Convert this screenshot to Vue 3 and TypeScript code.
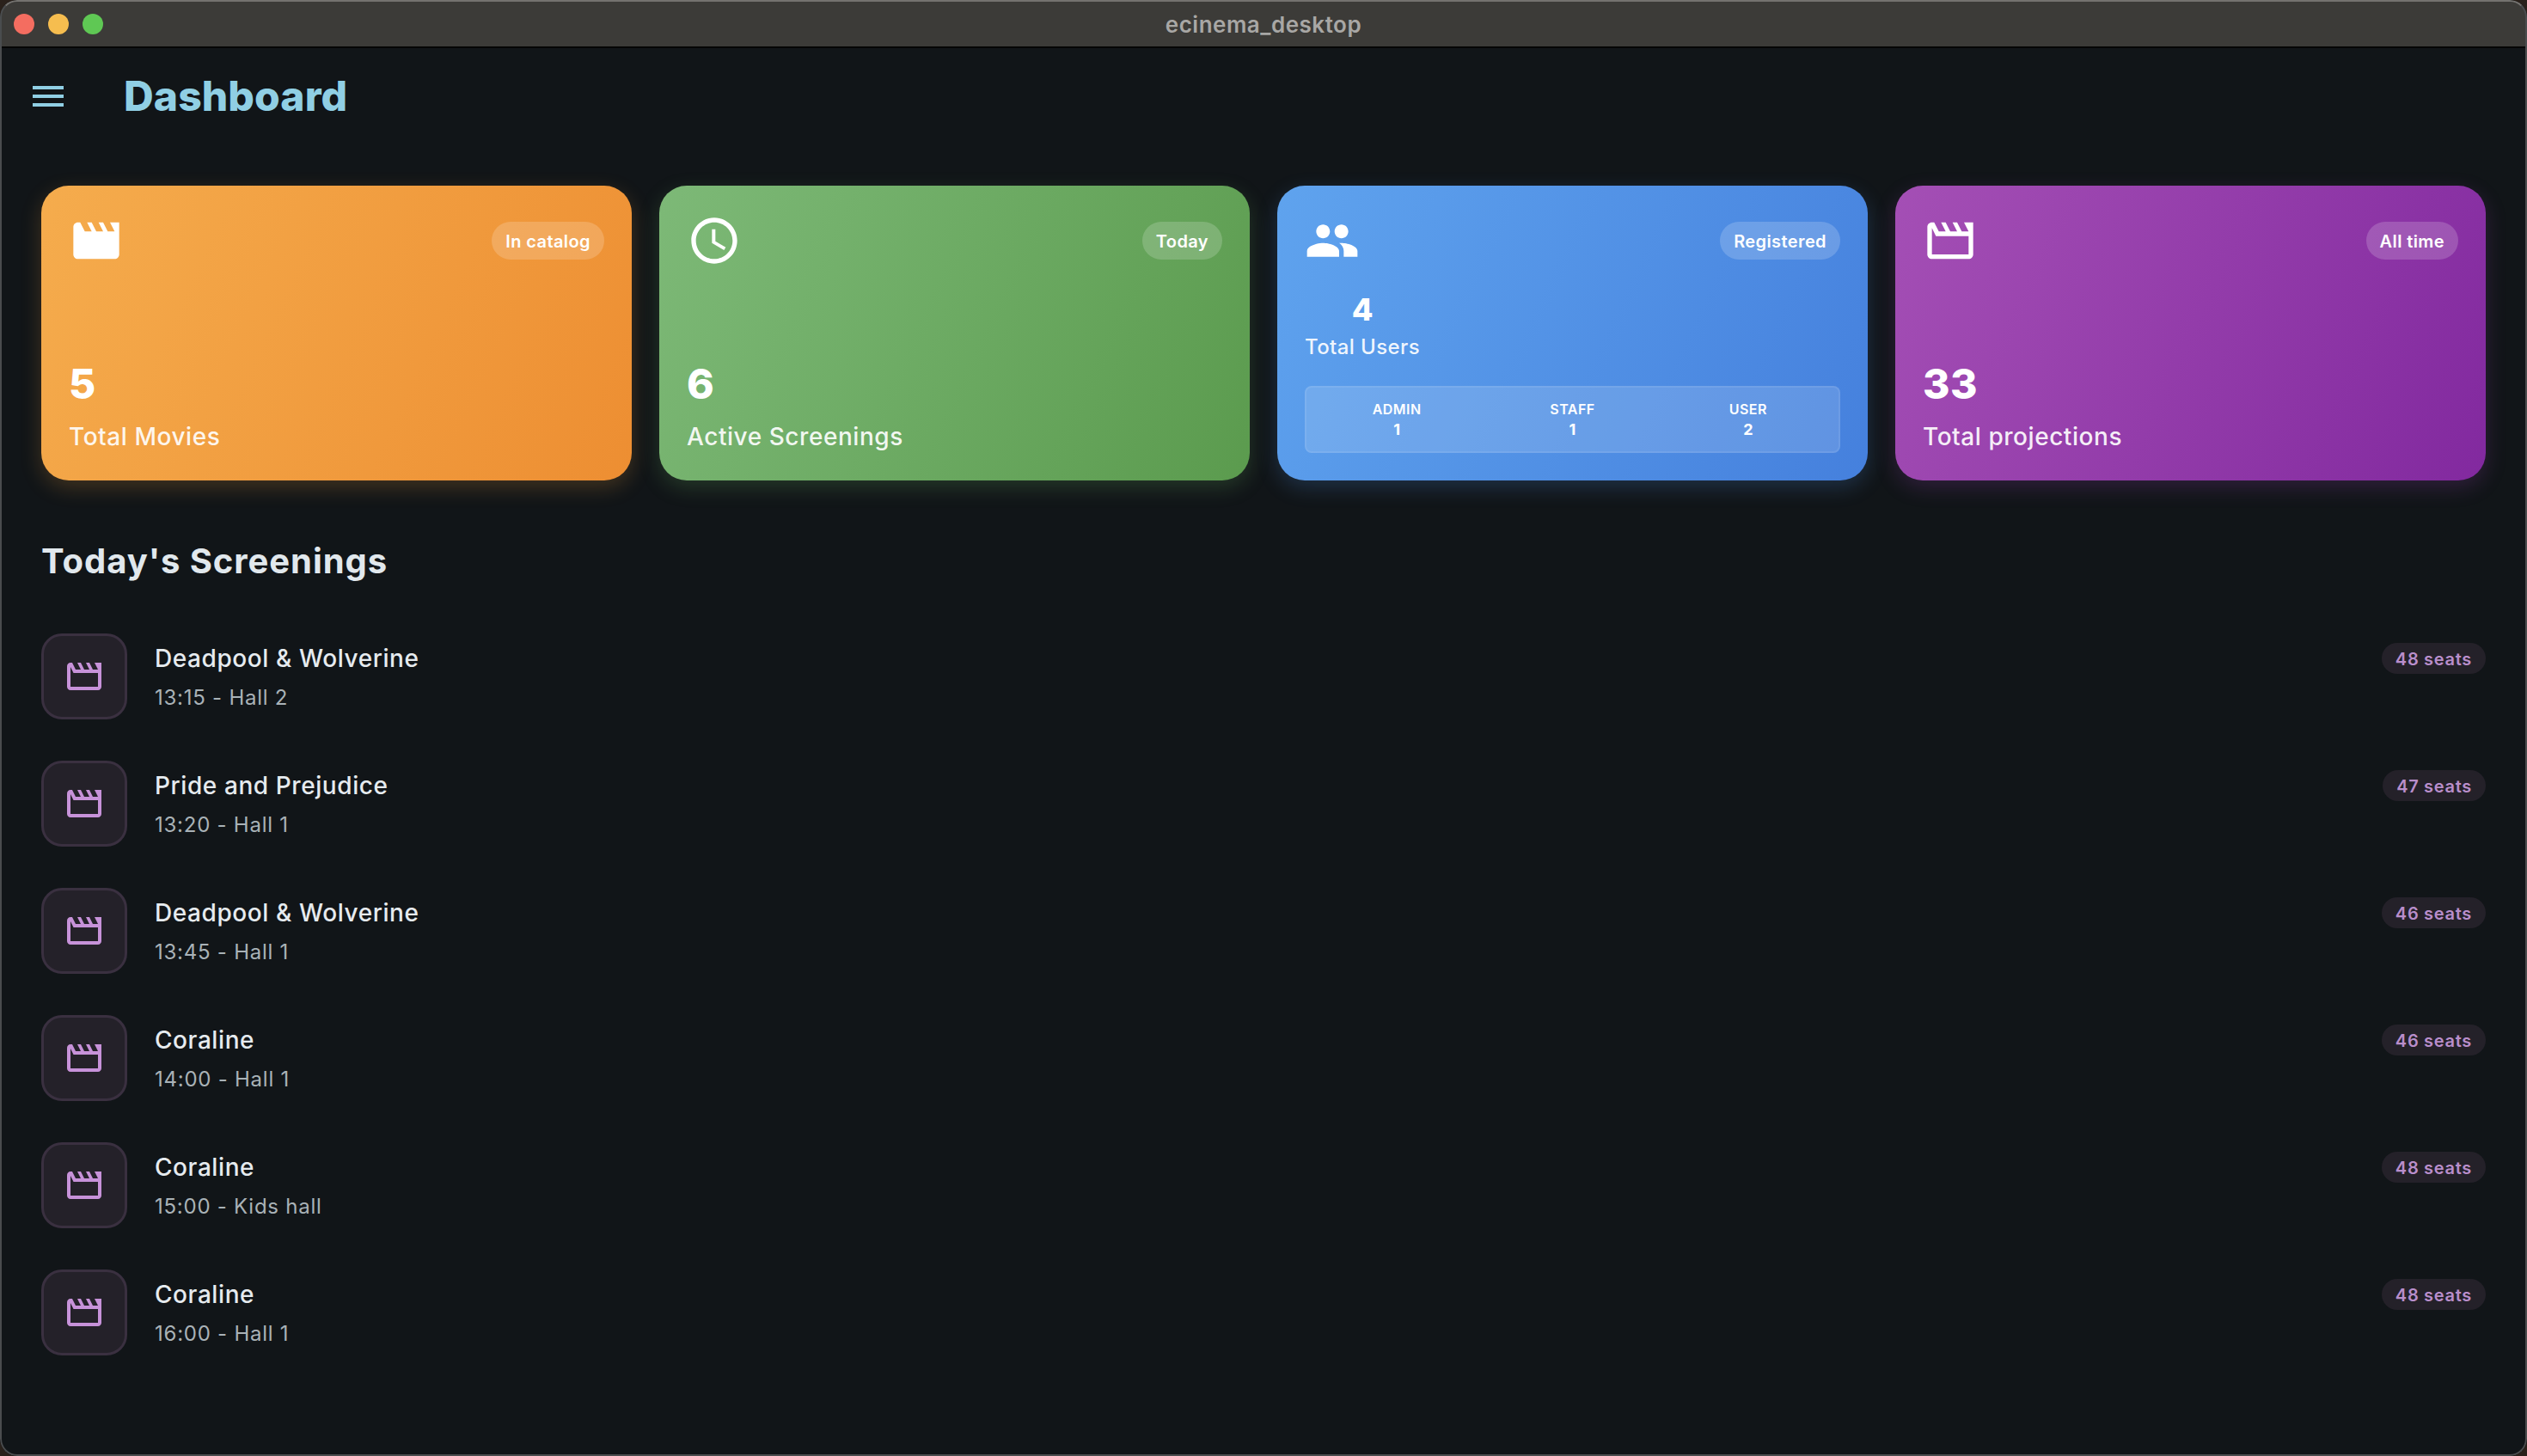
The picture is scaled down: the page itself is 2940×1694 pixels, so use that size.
<script setup lang="ts">
interface StatCard {
  tone: string;
  icon: string;
  badge: string;
  value: string;
  label: string;
}

const icons = {
  movie:
    "M18 4l2 4h-3l-2-4h-2l2 4h-3l-2-4H8l2 4H7L5 4H4c-1.1 0-1.99.9-1.99 2L2 18c0 1.1.9 2 2 2h16c1.1 0 2-.9 2-2V4h-4z",
  movieOutlined:
    "M4 6.47L5.76 10H20v8H4V6.47M22 4h-4l2 4h-3l-2-4h-2l2 4h-3l-2-4H8l2 4H7L5 4H4c-1.1 0-1.99.9-1.99 2L2 18c0 1.1.9 2 2 2h16c1.1 0 2-.9 2-2V4z",
  schedule:
    "M11.99 2C6.47 2 2 6.48 2 12s4.47 10 9.99 10C17.52 22 22 17.52 22 12S17.52 2 11.99 2zM12 20c-4.42 0-8-3.58-8-8s3.58-8 8-8 8 3.58 8 8-3.58 8-8 8zm.5-13H11v6l5.25 3.15.75-1.23-4.5-2.67z",
  people:
    "M16 11c1.66 0 2.99-1.34 2.99-3S17.66 5 16 5c-1.66 0-3 1.34-3 3s1.34 3 3 3zm-8 0c1.66 0 2.99-1.34 2.99-3S9.66 5 8 5C6.34 5 5 6.34 5 8s1.34 3 3 3zm0 2c-2.33 0-7 1.17-7 3.5V19h14v-2.5c0-2.33-4.67-3.5-7-3.5zm8 0c-.29 0-.62.02-.97.05 1.16.84 1.97 1.97 1.97 3.45V19h6v-2.5c0-2.33-4.67-3.5-7-3.5z",
  menu: "M3 18h18v-2H3v2zm0-5h18v-2H3v2zm0-7v2h18V6H3z",
};

const cards: StatCard[] = [
  { tone: "orange", icon: icons.movie, badge: "In catalog", value: "5", label: "Total Movies" },
  { tone: "green", icon: icons.schedule, badge: "Today", value: "6", label: "Active Screenings" },
  { tone: "blue", icon: icons.people, badge: "Registered", value: "4", label: "Total Users" },
  { tone: "purple", icon: icons.movieOutlined, badge: "All time", value: "33", label: "Total projections" },
];

const roles = [
  { name: "ADMIN", count: 1 },
  { name: "STAFF", count: 1 },
  { name: "USER", count: 2 },
];

const screenings = [
  { title: "Deadpool & Wolverine", when: "13:15 - Hall 2", seats: 48 },
  { title: "Pride and Prejudice", when: "13:20 - Hall 1", seats: 47 },
  { title: "Deadpool & Wolverine", when: "13:45 - Hall 1", seats: 46 },
  { title: "Coraline", when: "14:00 - Hall 1", seats: 46 },
  { title: "Coraline", when: "15:00 - Kids hall", seats: 48 },
  { title: "Coraline", when: "16:00 - Hall 1", seats: 48 },
];
</script>

<template>
  <div class="window">
    <header class="titlebar">
      <div class="lights">
        <span class="light red"></span>
        <span class="light yellow"></span>
        <span class="light green"></span>
      </div>
      <span class="window-title">ecinema_desktop</span>
    </header>

    <div class="appbar">
      <svg class="menu" viewBox="0 0 24 24"><path :d="icons.menu" /></svg>
      <h1>Dashboard</h1>
    </div>

    <main class="content">
      <section class="cards">
        <article v-for="card in cards" :key="card.label" class="card" :class="card.tone">
          <div class="card-top">
            <svg class="card-icon" viewBox="0 0 24 24"><path :d="card.icon" /></svg>
            <span class="badge">{{ card.badge }}</span>
          </div>
          <template v-if="card.tone === 'blue'">
            <div class="users-stat">
              <div class="users-value">{{ card.value }}</div>
              <div class="users-label">{{ card.label }}</div>
            </div>
            <div class="roles">
              <div v-for="role in roles" :key="role.name" class="role">
                <span class="role-name">{{ role.name }}</span>
                <span class="role-count">{{ role.count }}</span>
              </div>
            </div>
          </template>
          <div v-else class="stat">
            <div class="value">{{ card.value }}</div>
            <div class="label">{{ card.label }}</div>
          </div>
        </article>
      </section>

      <h2>Today's Screenings</h2>

      <ul class="screenings">
        <li v-for="(item, i) in screenings" :key="i" class="screening">
          <div class="thumb">
            <svg viewBox="0 0 24 24"><path :d="icons.movieOutlined" /></svg>
          </div>
          <div class="info">
            <div class="name">{{ item.title }}</div>
            <div class="when">{{ item.when }}</div>
          </div>
          <span class="seats">{{ item.seats }} seats</span>
        </li>
      </ul>
    </main>
  </div>
</template>

<style>
html,
body {
  margin: 0;
  background: #2a211b;
}
</style>

<style scoped>
.window {
  position: relative;
  width: 2940px;
  height: 1694px;
  overflow: hidden;
  border-radius: 20px;
  background: #111518;
  font-family: Inter, "Noto Sans", sans-serif;
}

.window::after {
  content: "";
  position: absolute;
  inset: 0;
  border: 2px solid #4a4c4e;
  border-top-color: #74726f;
  border-radius: 20px;
  pointer-events: none;
}

.titlebar {
  display: grid;
  grid-template-columns: 1fr auto 1fr;
  align-items: center;
  height: 52px;
  padding-top: 2px;
  background: #3c3b38;
  border-bottom: 2px solid #050505;
  box-sizing: content-box;
}

.lights {
  display: flex;
  gap: 16px;
  padding-left: 16px;
}

.light {
  width: 24px;
  height: 24px;
  border-radius: 50%;
}

.light.red { background: #f46d60; }
.light.yellow { background: #f6bd4f; }
.light.green { background: #5fc854; }

.window-title {
  color: #a8a7a5;
  font-size: 26px;
  font-weight: 600;
  letter-spacing: 0.5px;
}

.appbar {
  display: flex;
  align-items: center;
  gap: 64px;
  height: 112px;
  padding: 0 32px;
}

.menu {
  width: 48px;
  height: 48px;
  fill: #90cfe4;
}

h1 {
  margin: -2px 0 0;
  color: #90cfe4;
  font-size: 48px;
  font-weight: 800;
  letter-spacing: 0.1px;
}

.content {
  padding: 48px 48px 0;
}

.cards {
  display: grid;
  grid-template-columns: repeat(4, 1fr);
  gap: 32px;
}

.card {
  display: flex;
  flex-direction: column;
  justify-content: space-between;
  box-sizing: border-box;
  height: 343px;
  padding: 32px;
  border-radius: 32px;
  color: #fff;
}

.card.orange {
  background: linear-gradient(115deg, #f5ac4d, #ed8e32);
  box-shadow: 0 8px 24px rgba(240, 160, 60, 0.22);
}

.card.green {
  background: linear-gradient(115deg, #7db977, #5b9b4e);
  box-shadow: 0 8px 24px rgba(110, 180, 100, 0.22);
}

.card.blue {
  background: linear-gradient(115deg, #5fa3ee, #4580dd);
  box-shadow: 0 8px 24px rgba(80, 150, 235, 0.22);
}

.card.purple {
  background: linear-gradient(115deg, #a44fb5, #82299f);
  box-shadow: 0 8px 24px rgba(160, 70, 185, 0.22);
}

.card-top {
  display: flex;
  align-items: center;
  justify-content: space-between;
}

.card-icon {
  width: 64px;
  height: 64px;
  fill: #fff;
}

.badge {
  display: flex;
  align-items: center;
  height: 44px;
  padding: 1px 16px 0;
  box-sizing: border-box;
  border-radius: 22px;
  background: rgba(255, 255, 255, 0.18);
  font-size: 20px;
  font-weight: 600;
  letter-spacing: 0.4px;
}

.stat {
  margin-bottom: 2px;
}

.value {
  margin-bottom: -1px;
  padding-top: 1px;
  font-size: 48px;
  font-weight: 800;
  letter-spacing: 0.6px;
  line-height: 58px;
}

.label {
  margin-top: 16px;
  color: rgba(255, 255, 255, 0.92);
  font-size: 28px;
  font-weight: 500;
  letter-spacing: 0.55px;
  line-height: 34px;
}

.users-stat {
  display: flex;
  flex-direction: column;
  align-items: center;
  align-self: flex-start;
  margin-top: -2px;
}

.users-value {
  margin-top: -3px;
  font-size: 36px;
  font-weight: 800;
  line-height: 44px;
}

.users-label {
  margin-top: 7px;
  color: rgba(255, 255, 255, 0.92);
  font-size: 24px;
  font-weight: 500;
  letter-spacing: 0.4px;
  line-height: 29px;
}

.roles {
  display: grid;
  grid-template-columns: repeat(3, 1fr);
  box-sizing: border-box;
  height: 78px;
  padding: 0 3px;
  align-items: center;
  border: 2px solid rgba(255, 255, 255, 0.08);
  border-radius: 8px;
  background: rgba(255, 255, 255, 0.14);
}

.role {
  display: flex;
  flex-direction: column;
  align-items: center;
  gap: 3px;
}

.role-name {
  font-size: 16px;
  font-weight: 600;
  letter-spacing: 0.5px;
  line-height: 20px;
}

.role-count {
  font-size: 18px;
  font-weight: 700;
  line-height: 22px;
}

h2 {
  margin: 70px 0 0;
  color: #e1e8ed;
  font-size: 40px;
  font-weight: 700;
  letter-spacing: 0.95px;
  line-height: 48px;
}

.screenings {
  display: flex;
  flex-direction: column;
  gap: 48px;
  margin: 60px 0 0;
  padding: 0;
  list-style: none;
}

.screening {
  display: flex;
  align-items: flex-start;
  height: 100px;
}

.thumb {
  display: flex;
  align-items: center;
  justify-content: center;
  box-sizing: border-box;
  width: 100px;
  height: 100px;
  border: 3px solid #3a3040;
  border-radius: 24px;
  background: #242129;
}

.thumb svg {
  width: 48px;
  height: 48px;
  fill: #c792d9;
}

.info {
  flex: 1;
  margin-left: 32px;
  padding-top: 11px;
}

.name {
  color: #e6ebef;
  font-size: 28px;
  font-weight: 500;
  letter-spacing: 0.58px;
  line-height: 36px;
}

.when {
  margin-top: 12px;
  color: #a9b2b7;
  font-size: 24px;
  letter-spacing: 0.75px;
  line-height: 32px;
}

.seats {
  display: flex;
  align-items: center;
  box-sizing: border-box;
  height: 36px;
  margin-top: 11px;
  padding: 1px 16px 0;
  border-radius: 18px;
  background: #242129;
  color: #b98ecb;
  font-size: 20px;
  font-weight: 600;
  letter-spacing: 0.7px;
}
</style>
